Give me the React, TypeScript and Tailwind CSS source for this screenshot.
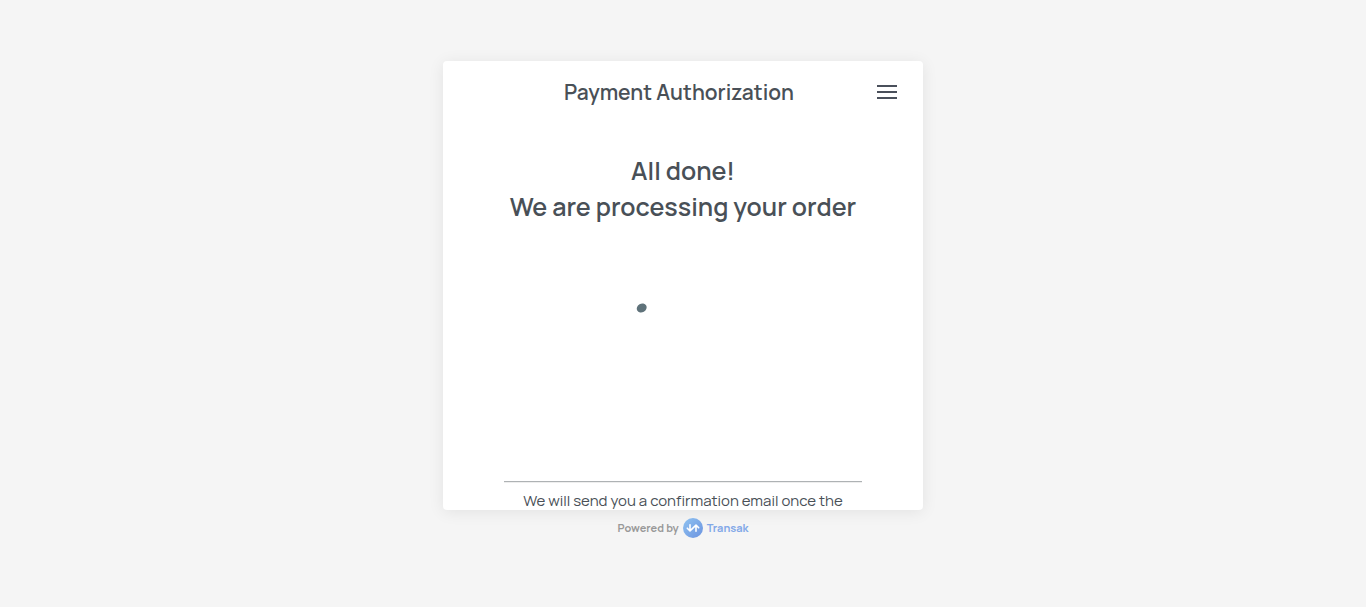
function Spinner() {
  return (
    <svg
      viewBox="0 0 100 100"
      className="h-[100px] w-[100px]"
      role="img"
      aria-label="Processing"
    >
      <ellipse
        cx="8.7"
        cy="33"
        rx="5.2"
        ry="4.3"
        transform="rotate(-30 8.7 33)"
        fill="#5f727a"
      />
    </svg>
  );
}

function TransakMark() {
  return (
    <svg viewBox="0 0 20 20" className="h-5 w-5" aria-hidden="true">
      <defs>
        <linearGradient id="mark" x1="0" y1="0" x2="1" y2="1">
          <stop offset="0" stopColor="#8fc3f1" />
          <stop offset="1" stopColor="#6c93e0" />
        </linearGradient>
      </defs>
      <circle cx="10" cy="10" r="10" fill="url(#mark)" />
      <path
        d="M4.3 10.2 7 12.9 13 7.1l2.7 2.7M7 6.8v6M13 7.3v6"
        fill="none"
        stroke="#fff"
        strokeWidth="1.6"
        strokeLinecap="round"
        strokeLinejoin="round"
      />
    </svg>
  );
}

function Header() {
  return (
    <header className="grid grid-cols-[48px_1fr_48px] items-center px-3 pt-[15px]">
      <h1 className="col-start-2 pr-2 text-center text-[21px] leading-8 font-semibold">
        Payment Authorization
      </h1>
      <button
        type="button"
        aria-label="Menu"
        className="flex h-8 w-8 items-center justify-center justify-self-center"
      >
        <svg viewBox="0 0 20 14" className="h-[14px] w-5" aria-hidden="true">
          <path d="M0 1h20M0 7h20M0 13h20" stroke="#4a505b" strokeWidth="2" />
        </svg>
      </button>
    </header>
  );
}

export default function App() {
  return (
    <div className="flex min-h-screen flex-col items-center bg-[#f5f5f5] pt-[10vh] font-['Manrope','Inter',sans-serif] text-[#495057]">
      <main className="flex h-[74vh] w-full max-w-[480px] flex-col overflow-hidden rounded bg-white shadow-[0_2px_16px_rgba(0,0,0,0.08)]">
        <Header />
        <section className="flex flex-col px-[61px] pt-[45px]">
          <h2 className="text-center text-[25px] leading-9 font-semibold whitespace-nowrap">
            All done!
            <br />
            We are processing your order
          </h2>
          <div className="flex justify-center pt-[50px] pb-[106px]">
            <Spinner />
          </div>
          <hr className="border-t border-b border-t-[#aeb2b4] border-b-[#eeeeee]" />
          <p className="pt-2 text-center text-[15px] leading-5 whitespace-nowrap">
            We will send you a confirmation email once the
          </p>
        </section>
      </main>
      <footer className="flex items-center gap-1 pt-2 text-[11px] leading-5 font-bold">
        <span className="text-[#999999]">Powered by</span>
        <a href="#transak" className="flex items-center gap-1 text-[#82a8e8]">
          <TransakMark />
          Transak
        </a>
      </footer>
    </div>
  );
}
